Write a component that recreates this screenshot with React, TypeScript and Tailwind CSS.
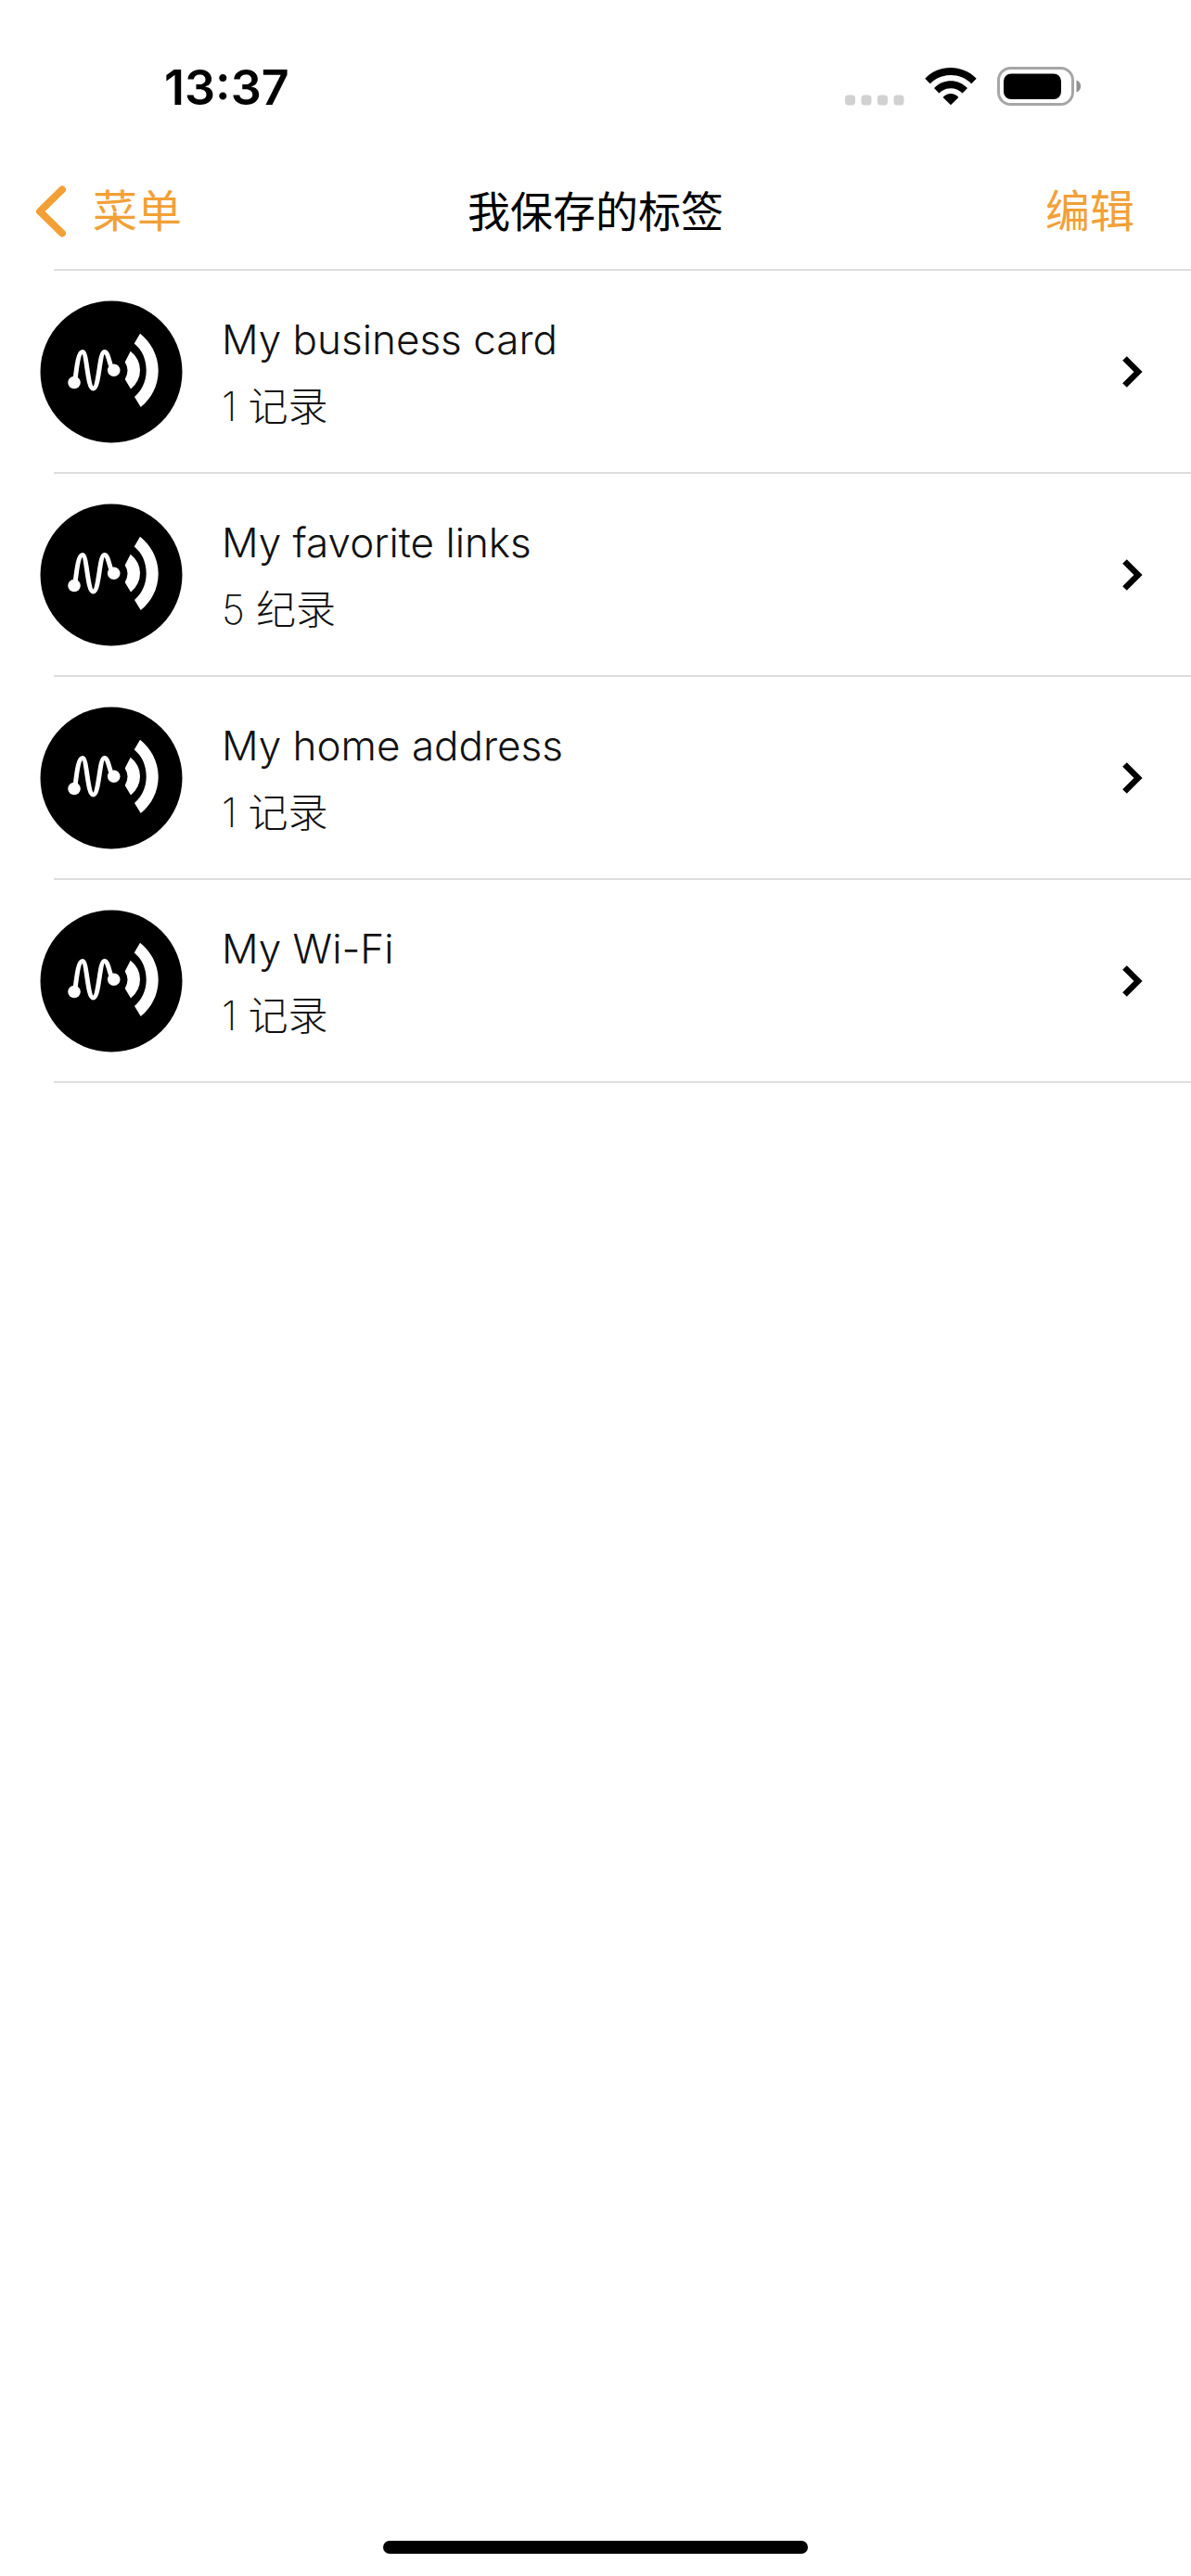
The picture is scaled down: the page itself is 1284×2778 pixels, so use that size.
interface SavedTag {
  id: number;
  name: string;
  count: string;
}

const tags: SavedTag[] = [
  { id: 1, name: 'My business card', count: '1 记录' },
  { id: 2, name: 'My favorite links', count: '5 纪录' },
  { id: 3, name: 'My home address', count: '1 记录' },
  { id: 4, name: 'My Wi-Fi', count: '1 记录' },
];

function StatusBar() {
  return (
    <div className="flex h-[164px] items-start justify-between pt-[65px] pr-[118px] pl-[177px]">
      <time className="text-[52px] leading-[60px] font-semibold">13:37</time>
      <div className="flex items-center pt-[7px]">
        <svg className="h-[42px] w-[64px]" viewBox="0 0 64 42" fill="#d1d1d1" aria-hidden="true">
          <rect x="0" y="30.5" width="11" height="11" rx="3.5" />
          <rect x="17.5" y="30.5" width="11" height="11" rx="3.5" />
          <rect x="35" y="30.5" width="11" height="11" rx="3.5" />
          <rect x="52.5" y="30.5" width="11" height="11" rx="3.5" />
        </svg>
        <svg className="ml-[22px] h-[42px] w-[56px]" viewBox="0 0 56 42" aria-hidden="true">
          <path d="M0.3 12.7C15.5 -3 40.5 -3 55.7 12.7L50.3 18.3C38 6 18 6 5.7 18.3Z" />
          <path d="M10 23C20 12.5 36 12.5 46 23L40.6 28.5C33.5 21.5 22.5 21.5 15.4 28.5Z" />
          <path d="M19.6 33C24.2 27.8 31.8 27.8 36.4 33L28 41.3Z" />
        </svg>
        <svg className="ml-[22px] h-[42px] w-[91px]" viewBox="0 0 91 42" aria-hidden="true">
          <rect x="1.5" y="1.5" width="80" height="39" rx="13" fill="none" stroke="#a6a6a6" strokeWidth="3" />
          <rect x="7" y="7.5" width="62" height="27.5" rx="8" />
          <path d="M85.5 14.5C91.7 16.5 91.7 25.5 85.5 27.5Z" fill="#909090" />
        </svg>
      </div>
    </div>
  );
}

function NavBar() {
  return (
    <header>
      <div className="grid h-[126px] grid-cols-[1fr_auto_1fr] items-center px-[38px] pt-[2px]">
        <button type="button" className="flex items-center gap-7 justify-self-start text-[48px] leading-[56px] text-[#f2a036]">
          <svg className="h-[56px] w-[34px]" viewBox="0 0 34 56" fill="none" stroke="currentColor" strokeWidth="8" strokeLinecap="round" strokeLinejoin="round" aria-hidden="true">
            <path d="M29 4.5L5 28L29 51.5" />
          </svg>
          菜单
        </button>
        <h1 className="text-[46px] leading-[56px]">我保存的标签</h1>
        <button type="button" className="mr-[23px] justify-self-end text-[48px] leading-[56px] text-[#f2a036]">
          编辑
        </button>
      </div>
      <div className="ml-[58px] h-[2px] bg-[#dedede]" />
    </header>
  );
}

function TagLogo() {
  return (
    <svg className="h-[154px] w-[154px] shrink-0" viewBox="0 0 154 154" aria-hidden="true">
      <circle cx="77" cy="77" r="76.5" />
      <path
        d="M38 86C40 68 42 55.5 46 55.5C51 55.5 51 95 57.5 95C64 95 64 55.5 69.5 55.5C73 55.5 74 63 77 72"
        fill="none"
        stroke="#fff"
        strokeWidth="5"
      />
      <circle cx="37" cy="88.5" r="6.8" fill="#fff" />
      <circle cx="79.7" cy="75.3" r="6.8" fill="#fff" />
      <path d="M97.7 54.7Q108 63 108 75Q108 87 98 95.6L91.7 85Q94.5 80 94.5 75.5Q94.5 71 91.7 66.4Z" fill="#fff" />
      <path d="M108 35.7C119 44 127.7 59 127.7 75.5C127.7 92 120 106 108.7 115L102 104C109 98 114.7 88 114.7 75.5C114.7 63 110 53 101.7 46.4Z" fill="#fff" />
    </svg>
  );
}

function TagRow({ tag }: { tag: SavedTag }) {
  return (
    <li>
      <a href={`#tag-${tag.id}`} className="flex h-[217px] items-center pr-[52px] pl-[43px]">
        <TagLogo />
        <div className="ml-[42px] flex-1 pt-[3px]">
          <h2 className="text-[44px] leading-[72px] font-light text-[#111]">{tag.name}</h2>
          <p className="text-[43px] leading-[72px] font-extralight text-[#111]">{tag.count}</p>
        </div>
        <svg className="h-[34px] w-[22px]" viewBox="0 0 22 34" fill="none" stroke="#000" strokeWidth="6.5" aria-hidden="true">
          <path d="M2.5 2.5L17 17L2.5 31.5" />
        </svg>
      </a>
      <div className="ml-[58px] h-[2px] bg-[#dedede]" />
    </li>
  );
}

export default function App() {
  return (
    <div className="flex min-h-screen flex-col bg-white font-[Inter,'Noto_Sans_CJK_SC',sans-serif] text-black">
      <StatusBar />
      <NavBar />
      <main className="flex-1">
        <ul>
          {tags.map((tag) => (
            <TagRow key={tag.id} tag={tag} />
          ))}
        </ul>
      </main>
      <div className="mb-6 h-[14px] w-[458px] self-center rounded-full bg-black" />
    </div>
  );
}
